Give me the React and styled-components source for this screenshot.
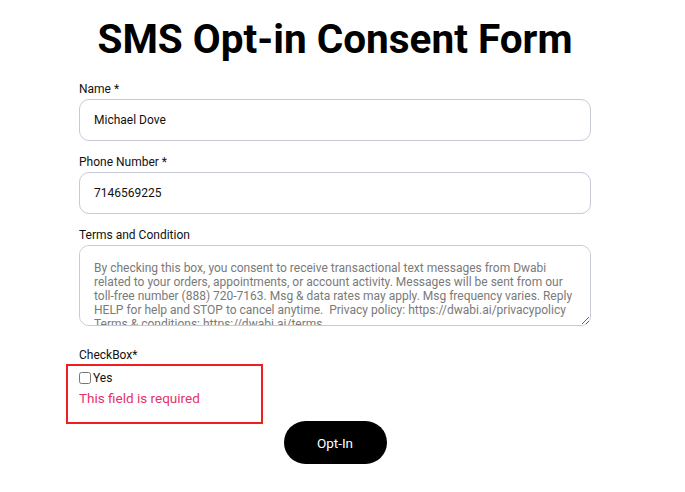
import React from 'react';
import styled, { createGlobalStyle } from 'styled-components';

const GlobalStyle = createGlobalStyle`
  body {
    margin: 0;
    background: #ffffff;
    font-family: Roboto, "Liberation Sans", sans-serif;
    color: #111111;
  }
`;

const Page = styled.div`
  width: 670px;
  display: flex;
  flex-direction: column;
  align-items: center;
`;

const Title = styled.h1`
  margin: 16px 0 17px 0;
  font-size: 40.5px;
  line-height: 47px;
  font-weight: 700;
  color: #000;
`;

const Form = styled.form`
  width: 512px;
  display: flex;
  flex-direction: column;
`;

const Field = styled.div`
  display: flex;
  flex-direction: column;
  margin-bottom: ${(p) => p.$gap || 12}px;
`;

const Label = styled.label`
  font-size: 12px;
  line-height: 18px;
  margin-bottom: 1px;
  color: #111;
`;

const Input = styled.input`
  box-sizing: border-box;
  height: 42px;
  padding: 0 14px;
  border: 1px solid #c6c9d6;
  border-radius: 10px;
  font-family: Roboto, "Liberation Sans", sans-serif;
  font-size: 12px;
  color: #111;
  outline: none;
`;

const TextArea = styled.textarea`
  box-sizing: border-box;
  height: 81px;
  padding: 15px 14px 0 14px;
  border: 1px solid #c6c9d6;
  border-radius: 10px;
  font-family: Roboto, "Liberation Sans", sans-serif;
  font-size: 12px;
  line-height: 14px;
  color: #7a7a7a;
  resize: vertical;
  outline: none;
  &::placeholder {
    color: #7a7a7a;
  }
`;

const CheckGroup = styled.div`
  position: relative;
  display: flex;
  flex-direction: column;
  padding-top: 2px;
`;

const Highlight = styled.div`
  position: absolute;
  left: -13px;
  top: -1px;
  width: 197px;
  height: 60px;
  box-sizing: border-box;
  border: 2px solid #f21d1d;
  pointer-events: none;
`;

const CheckRow = styled.label`
  display: flex;
  align-items: center;
  height: 22px;
  font-size: 12px;
  color: #111;
`;

const Box = styled.input`
  width: 12px;
  height: 12px;
  margin: 0 2px 0 0;
`;

const Error = styled.div`
  font-size: 13.5px;
  line-height: 18px;
  color: #e3336a;
`;

const Submit = styled.button`
  align-self: center;
  margin-top: 14px;
  width: 103px;
  height: 43px;
  border: none;
  border-radius: 22px;
  background: #000;
  color: #fff;
  font-family: Roboto, "Liberation Sans", sans-serif;
  font-size: 13.5px;
`;

const terms =
  'By checking this box, you consent to receive transactional text messages from Dwabi related to your orders, appointments, or account activity. Messages will be sent from our toll-free number (888) 720-7163. Msg & data rates may apply. Msg frequency varies. Reply HELP for help and STOP to cancel anytime.  Privacy policy: https://dwabi.ai/privacypolicy Terms & conditions: https://dwabi.ai/terms';

export default function App() {
  return (
    <>
      <GlobalStyle />
      <Page>
        <Title>SMS Opt-in Consent Form</Title>
        <Form onSubmit={(e) => e.preventDefault()}>
          <Field>
            <Label>Name *</Label>
            <Input defaultValue="Michael Dove" />
          </Field>
          <Field>
            <Label>Phone Number *</Label>
            <Input defaultValue="7146569225" />
          </Field>
          <Field $gap={20}>
            <Label>Terms and Condition</Label>
            <TextArea readOnly placeholder={terms} />
          </Field>
          <Label>CheckBox*</Label>
          <CheckGroup>
            <Highlight />
            <CheckRow>
              <Box type="checkbox" />
              Yes
            </CheckRow>
            <Error>This field is required</Error>
          </CheckGroup>
          <Submit type="submit">Opt-In</Submit>
        </Form>
      </Page>
    </>
  );
}
